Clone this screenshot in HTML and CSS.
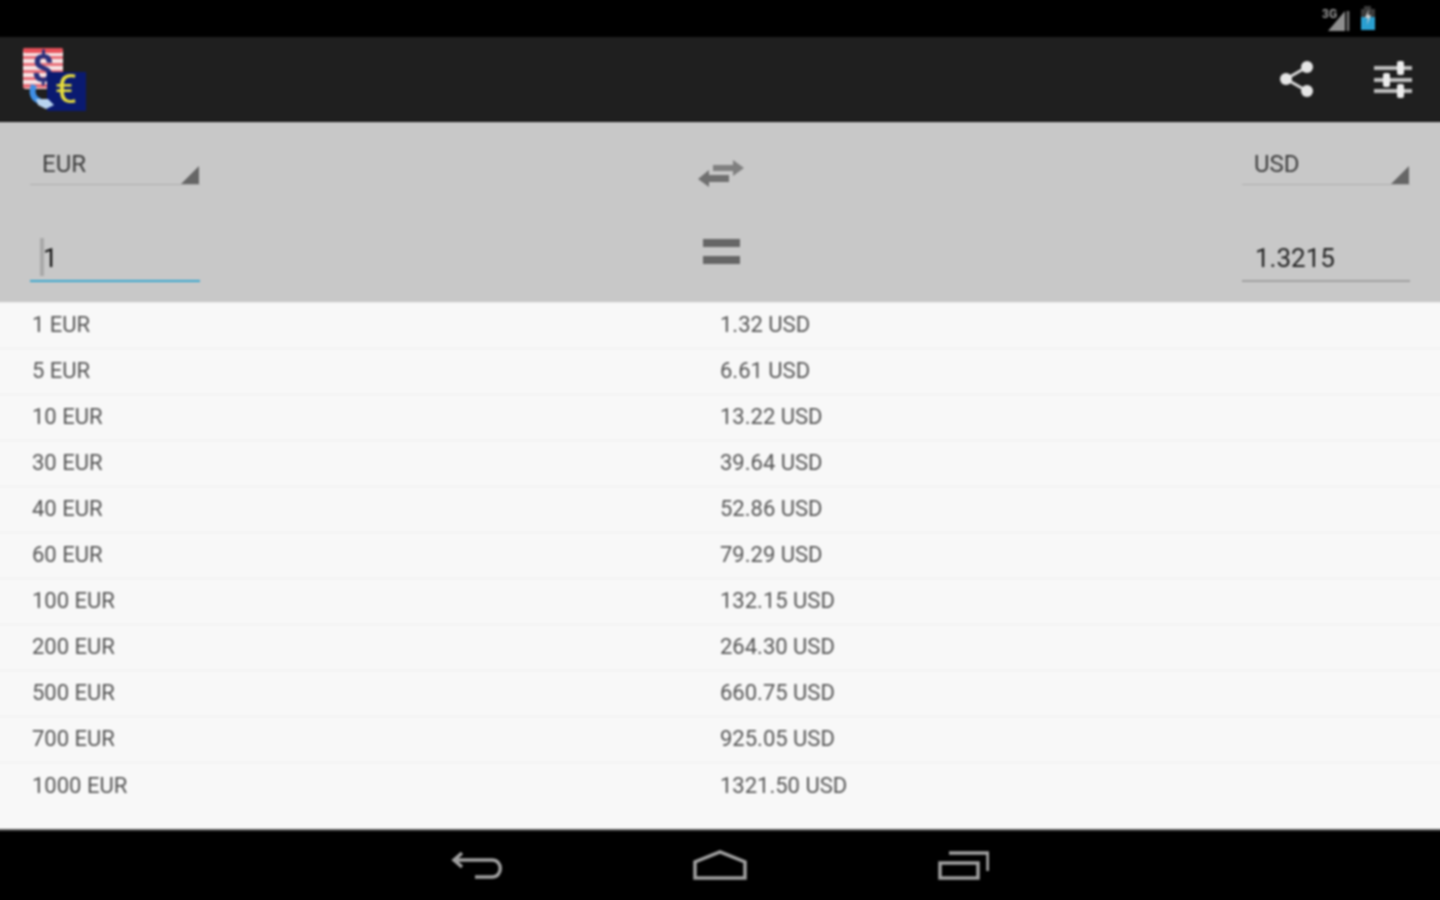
FILE: index.html
```html
<!DOCTYPE html>
<html lang="en">
<head>
    <meta charset="UTF-8">
    <meta name="viewport" content="width=device-width, initial-scale=1.0">
    <title>Currency Converter</title>
    <link rel="stylesheet" href="styles.css">
</head>
<body>

<div class="screen">
    <!-- Status bar -->
    <div class="statusbar">
        <svg class="signal" width="30" height="28" viewBox="0 0 30 28">
            <text x="0" y="13" class="signal-text">3G</text>
            <path d="M6 26 L23 6 V26 Z" fill="#8f8f8f"/>
            <path d="M26 6 V26" stroke="#777" stroke-width="2.5"/>
        </svg>
        <svg class="battery" width="18" height="26" viewBox="0 0 18 26">
            <path d="M5 1 H12 V4 H16 V25 H2 V4 H5 Z" fill="#3a3a3a"/>
            <path d="M2 12 H16 V25 H2 Z" fill="#2a9fd0"/>
            <path d="M10 4 L6 13 H9 L8 20 L12 10 H9 Z" fill="#cfcfcf"/>
        </svg>
    </div>

    <!-- Action bar -->
    <div class="actionbar">
        <svg class="logo" width="66" height="66" viewBox="0 0 66 66">
            <rect x="1" y="1" width="40" height="41" rx="3" fill="#f7e4e4"/>
            <rect x="1" y="1" width="40" height="5" rx="2" fill="#e8515a"/>
            <rect x="1" y="9" width="40" height="3" fill="#e8707a"/>
            <rect x="1" y="16" width="40" height="3" fill="#e8707a"/>
            <rect x="1" y="23" width="40" height="3" fill="#e8707a"/>
            <rect x="1" y="30" width="40" height="3" fill="#e8707a"/>
            <rect x="1" y="37" width="40" height="4" fill="#e8707a"/>
            <text x="21" y="35" class="logo-dollar">$</text>
            <rect x="25" y="25" width="39" height="39" fill="#0a1a70"/>
            <text x="44" y="56" class="logo-euro">€</text>
            <path d="M12 38 C9 46 11 52 18 54" fill="none" stroke="#3f8fe6" stroke-width="6"/>
            <path d="M14 52 L26 52 L32 58 L24 62 L16 58 Z" fill="#b8d4f0"/>
        </svg>
        <div class="actions">
            <svg width="40" height="40" viewBox="0 0 40 40">
                <path d="M31 8 L10 20 L31 32" fill="none" stroke="#d8d8d8" stroke-width="3"/>
                <circle cx="31" cy="8" r="6" fill="#e6e6e6"/>
                <circle cx="10" cy="20" r="6" fill="#e6e6e6"/>
                <circle cx="31" cy="32" r="6" fill="#e6e6e6"/>
            </svg>
            <svg width="42" height="40" viewBox="0 0 42 40">
                <path d="M2 9 H40 M2 21 H40 M2 32 H40" stroke="#bdbdbd" stroke-width="4"/>
                <rect x="25" y="2" width="7" height="14" rx="2" fill="#ececec"/>
                <rect x="11" y="14" width="7" height="14" rx="2" fill="#ececec"/>
                <rect x="25" y="25" width="7" height="14" rx="2" fill="#ececec"/>
            </svg>
        </div>
    </div>

    <!-- Converter panel -->
    <div class="panel">
        <div class="spinner">EUR</div>
        <svg class="swap" width="48" height="32" viewBox="0 0 48 32">
            <path d="M16 7 H36 V2 L47 10 L36 18 V13 H16 Z" fill="#808080"/>
            <path d="M32 17 H12 V12 L1 21 L12 29 V24 H32 Z" fill="#707070"/>
        </svg>
        <div class="spinner">USD</div>

        <div class="field field-active"><span class="cursor"></span>1</div>
        <div class="equals"></div>
        <div class="field">1.3215</div>
    </div>

    <!-- Amounts list -->
    <div class="list">
        <div class="row"><span>1 EUR</span><span>1.32 USD</span></div>
        <div class="row"><span>5 EUR</span><span>6.61 USD</span></div>
        <div class="row"><span>10 EUR</span><span>13.22 USD</span></div>
        <div class="row"><span>30 EUR</span><span>39.64 USD</span></div>
        <div class="row"><span>40 EUR</span><span>52.86 USD</span></div>
        <div class="row"><span>60 EUR</span><span>79.29 USD</span></div>
        <div class="row"><span>100 EUR</span><span>132.15 USD</span></div>
        <div class="row"><span>200 EUR</span><span>264.30 USD</span></div>
        <div class="row"><span>500 EUR</span><span>660.75 USD</span></div>
        <div class="row"><span>700 EUR</span><span>925.05 USD</span></div>
        <div class="row"><span>1000 EUR</span><span>1321.50 USD</span></div>
    </div>

    <!-- Navigation bar -->
    <div class="navbar">
        <svg width="52" height="32" viewBox="0 0 52 32">
            <path d="M11 3 L3 10 L11 17 M3 10 H41 C52 10 52 27 41 27 H24" fill="none" stroke="#a0a0a0" stroke-width="3.5"/>
        </svg>
        <svg width="54" height="32" viewBox="0 0 54 32">
            <path d="M2 28 V12 L27 2 L52 12 V28 Z" fill="none" stroke="#a0a0a0" stroke-width="3.5"/>
        </svg>
        <svg width="52" height="32" viewBox="0 0 52 32">
            <path d="M3 13 H41 V28 H3 Z" fill="none" stroke="#a0a0a0" stroke-width="3.5"/>
            <path d="M12 3 H51 V21" fill="none" stroke="#a0a0a0" stroke-width="3.5"/>
        </svg>
    </div>
</div>

</body>
</html>
```

FILE: styles.css
```css
body {
    font-family: Roboto, "Liberation Sans", sans-serif;
    margin: 0;
    padding: 0;
    background-color: #000;
    overflow: hidden;
}

/* 4px wider on each side so the blur doesn't darken the window edges */
.screen {
    display: flex;
    flex-direction: column;
    width: 1448px;
    height: 900px;
    margin-left: -4px;
    filter: blur(0.9px); /* reference is an upscaled capture */
}

.statusbar {
    height: 37px;
    flex-shrink: 0;
    background-color: #000;
    display: flex;
    align-items: flex-start;
    justify-content: flex-end;
    gap: 7px;
    padding: 5px 67px 0 0;
    box-sizing: border-box;
}

.signal-text {
    font-size: 12px;
    font-weight: bold;
    fill: #999;
}

.actionbar {
    height: 84px;
    flex-shrink: 0;
    background-color: #1f1f1f;
    border-bottom: 1px solid #111;
    display: flex;
    align-items: center;
    justify-content: space-between;
    padding: 0 30px 0 26px;
}

.logo {
    margin-top: 1px;
}

.logo-dollar {
    font-size: 38px;
    font-weight: bold;
    fill: #2a2f7a;
    text-anchor: middle;
}

.logo-euro {
    font-size: 40px;
    fill: #e6dc3c;
    text-anchor: middle;
}

.actions {
    display: flex;
    align-items: center;
    gap: 56px;
}

.panel {
    height: 180px;
    flex-shrink: 0;
    background-color: #c8c8c8;
    display: grid;
    grid-template-columns: 170px 1fr 168px;
    grid-template-rows: 63px 97px;
    align-items: end;
    justify-items: center;
    padding: 0 34px;
}

.spinner {
    justify-self: stretch;
    position: relative;
    height: 40px;
    line-height: 38px;
    padding-left: 12px;
    font-size: 24px;
    color: #3c3c3c;
    border-bottom: 1px solid #aeaeae;
    box-sizing: border-box;
}

.spinner::after {
    content: "";
    position: absolute;
    right: 1px;
    bottom: 0;
    border-style: solid;
    border-width: 0 0 18px 18px;
    border-color: transparent transparent #666 transparent;
}

.swap {
    align-self: end;
    margin-bottom: -5px;
}

.field {
    justify-self: stretch;
    position: relative;
    height: 46px;
    line-height: 44px;
    padding-left: 13px;
    font-size: 26px;
    color: #222;
    border-bottom: 2px solid #a0a0a0;
    box-sizing: border-box;
}

.field-active {
    border-bottom-color: #39a7cf;
    color: #111;
}

.cursor {
    position: absolute;
    left: 10px;
    top: 2px;
    width: 4px;
    height: 38px;
    background-color: #a8a8a8;
}

.equals {
    width: 37px;
    height: 8px;
    margin-bottom: 35px;
    background-color: #666;
    box-shadow: 0 17px 0 #666;
}

.list {
    flex: 1;
    background-color: #f8f8f8;
    border-top: 1px solid #eee;
}

.row {
    display: grid;
    grid-template-columns: 688px 1fr;
    height: 46px;
    line-height: 44px;
    padding-left: 36px;
    font-size: 22px;
    color: #555;
    border-bottom: 1px solid #eee;
    box-sizing: border-box;
}

.row:last-child {
    border-bottom: none;
    line-height: 46px;
}

.navbar {
    height: 71px;
    flex-shrink: 0;
    background-color: #000;
    border-top: 2px solid #555;
    box-sizing: border-box;
    display: flex;
    align-items: center;
    justify-content: center;
    gap: 190px;
}
```
